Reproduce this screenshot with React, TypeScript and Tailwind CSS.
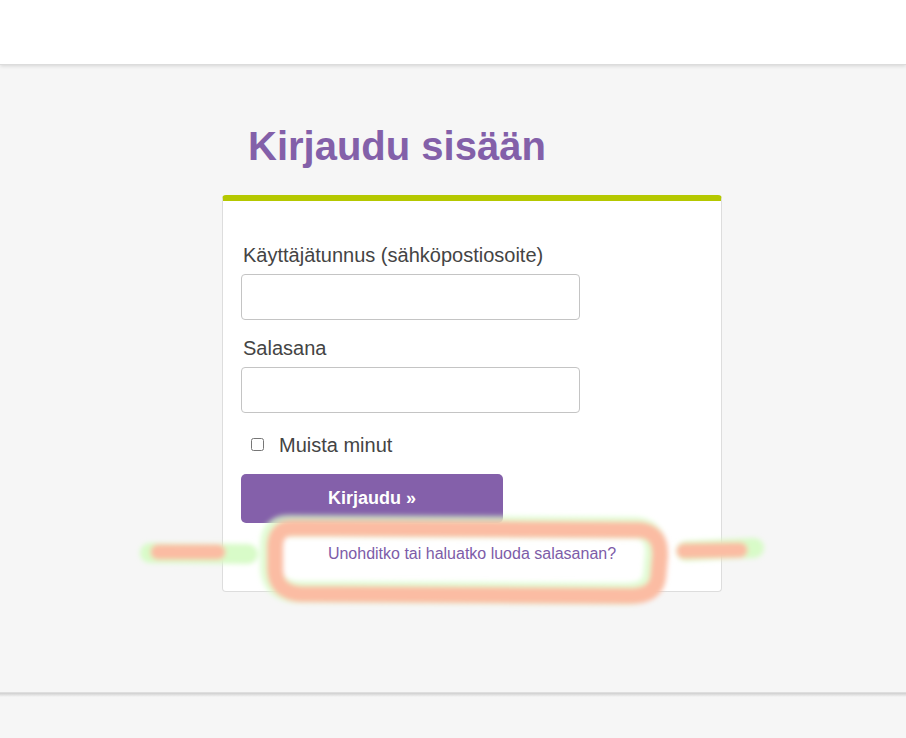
import React from "react";

function Scribble() {
  // hand-drawn highlight around the password link
  const loop =
    "M 292 528 L 640 530 Q 661 532 660 556 L 658 578 Q 655 596 630 596 L 300 594 Q 276 592 275 570 L 275 546 Q 276 528 292 528";
  return (
    <svg
      className="pointer-events-none absolute left-0 top-0"
      width="906"
      height="738"
      viewBox="0 0 906 738"
    >
      <defs>
        <filter id="blur" x="-20%" y="-50%" width="140%" height="200%">
          <feGaussianBlur stdDeviation="2.6" />
        </filter>
      </defs>
      <g filter="url(#blur)" fill="none" strokeLinecap="round" strokeLinejoin="round">
        <path d="M 150 553 L 248 554" stroke="#d8fbc8" strokeWidth="20" />
        <path d="M 686 551 L 754 548" stroke="#d8fbc8" strokeWidth="20" />
        <path d={loop} stroke="#dafbcb" strokeWidth="22" opacity="0.8" transform="translate(-4 -2)" />
        <path d="M 158 552 L 218 552" stroke="#fbbca3" strokeWidth="15" />
        <path d="M 684 551 L 740 550" stroke="#fbbca3" strokeWidth="15" />
        <path d={loop} stroke="#fbbca3" strokeWidth="16" />
      </g>
    </svg>
  );
}

export default function App() {
  return (
    <div className="relative min-h-screen bg-[#f6f6f6] font-['Liberation_Sans',Arial,sans-serif]">
      <header className="relative z-10 h-[65px] border-b border-[#dcdcdc] bg-white shadow-[0_1px_4px_rgba(0,0,0,0.14)]" />

      <main className="h-[627px]">
        <div className="ml-[222px] w-[500px] pt-[58px]">
          <h1 className="pl-[26px] text-[40px] font-bold leading-[46px] text-[#8360a9]">
            Kirjaudu sisään
          </h1>

          <div className="mt-[26px] rounded-[4px] border border-t-[6px] border-[#dddddd] border-t-[#b5c800] bg-white px-[18px] pb-[28px] pt-[43px]">
            <label className="block pl-[2px] text-[20px] leading-[23px] text-[#444]">
              Käyttäjätunnus (sähköpostiosoite)
            </label>
            <input
              type="text"
              className="mt-[7px] block h-[46px] w-[339px] rounded-[4px] border border-[#c4c4c4] bg-white px-3 text-[18px] outline-none"
            />

            <label className="mt-[17px] block pl-[2px] text-[20px] leading-[23px] text-[#444]">
              Salasana
            </label>
            <input
              type="password"
              className="mt-[7px] block h-[46px] w-[339px] rounded-[4px] border border-[#c4c4c4] bg-white px-3 text-[18px] outline-none"
            />

            <label className="mt-[21px] flex items-center gap-[15px] pl-[10px] text-[20px] leading-[23px] text-[#444]">
              <input type="checkbox" className="m-0 h-[13px] w-[13px] -translate-y-[1px]" />
              Muista minut
            </label>

            <button
              type="button"
              className="mt-[17px] block h-[49px] w-[262px] rounded-[5px] bg-[#8460aa] text-[18px] font-bold text-white"
            >
              Kirjaudu »
            </button>

            <p className="mt-[22px] text-center text-[16px] leading-[18px] text-[#7d5ca8]">
              <a href="#">Unohditko tai haluatko luoda salasanan?</a>
            </p>
          </div>
        </div>
      </main>

      <footer className="h-[46px] border-t border-[#dedede] bg-[linear-gradient(#cfcfcf,#f6f6f6_4px)]" />

      <Scribble />
    </div>
  );
}
